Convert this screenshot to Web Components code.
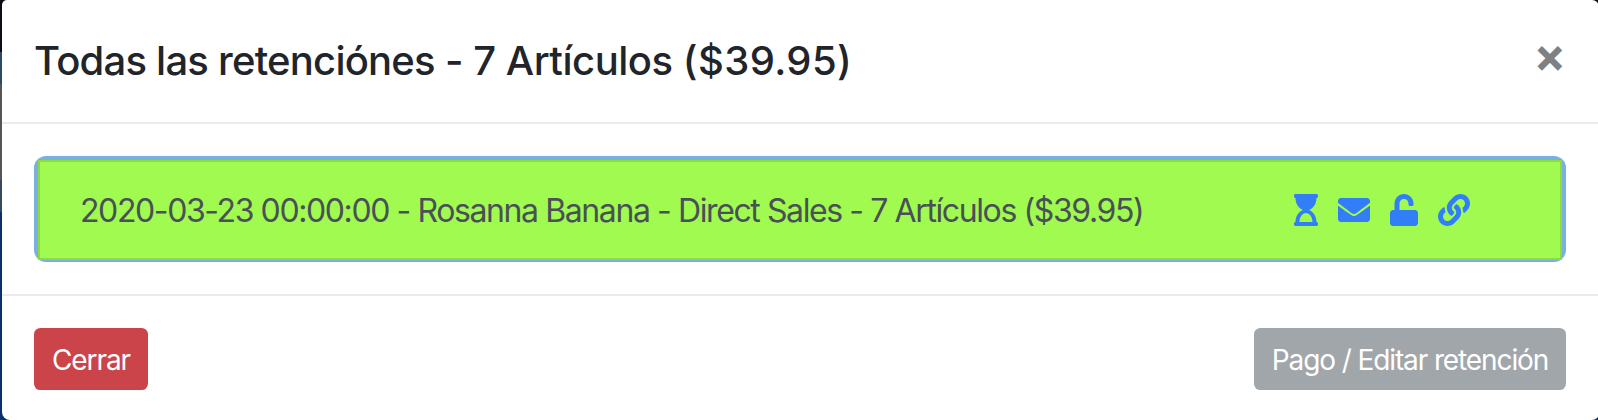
<!DOCTYPE html>
<html lang="es"><head><meta charset="utf-8"><title>Retenciones</title>
<style>
html,body{margin:0;height:420px;overflow:hidden}
body{font-family:Inter,"Liberation Sans",sans-serif;background:linear-gradient(#0c0c14 0 52px,#2d4a63 52px 84px,#555 84px 180px,#34495c 180px 212px,#0b3069 212px)}
.words{letter-spacing:-0.78px}
.amount{letter-spacing:0.4px}
</style></head><body>
<hold-modal>
<modal-title slot="title"><span class="words">Todas las retenciónes</span> - 7 Artículos <span class="amount">($39.95)</span></modal-title>
<close-button slot="title"></close-button>
<hold-item>2020-03-23 00:00:00 - Rosanna Banana - Direct Sales - 7 Artículos ($39.95)
<fa-icon slot="icons" name="hourglass"></fa-icon><fa-icon slot="icons" name="envelope"></fa-icon><fa-icon slot="icons" name="unlock"></fa-icon><fa-icon slot="icons" name="link"></fa-icon></hold-item>
<action-button slot="footer" style="--bg:#cb444a;--w:114px;--ls:-1.1px">Cerrar</action-button>
<action-button slot="footer" style="--bg:#a1a6aa;--w:312px;--ls:-1.11px">Pago / Editar retención</action-button>
</hold-modal>
<script>
const define=(name,html)=>customElements.define(name,class extends HTMLElement{
  constructor(){super();this.attachShadow({mode:'open'}).innerHTML=html;}
});
define('hold-modal',`<style>
:host{display:block;box-sizing:border-box;margin-left:2px;width:1597px;height:420px;background:#fff;border-radius:5px 7px 7px 8px}
header,footer{display:flex;justify-content:space-between;box-sizing:border-box;padding:0 33px 0 32px}
header{height:124px;border-bottom:2px solid #ebebef;align-items:center}
main{padding:32px 33px 32px 32px}
footer{height:126px;border-top:2px solid #ebebef;padding-top:32px;align-items:flex-start}
</style><header><slot name="title"></slot></header><main><slot></slot></main><footer><slot name="footer"></slot></footer>`);
define('modal-title',`<style>:host{display:block;font-size:40px;line-height:60px;font-weight:500;color:#212529;letter-spacing:-0.48px;white-space:nowrap;padding-bottom:1px}</style><slot></slot>`);
define('close-button',`<style>:host{display:block;font-size:48px;line-height:48px;font-weight:700;color:#808080;padding-bottom:12px}</style><span>×</span>`);
define('hold-item',`<style>
:host{display:block;box-sizing:border-box;height:106px;padding:4px 4px 2px;background:#7ab0e0;border-radius:12px}
.row{display:flex;align-items:center;box-sizing:border-box;height:100px;border:2px solid #8bdb45;background:#a0fa4f;padding:0 90px 0 40px;justify-content:space-between}
.text{font-size:32px;line-height:48px;color:#495057;letter-spacing:-1.4px;white-space:nowrap;padding-top:2px}
.icons{display:flex;gap:20px;align-items:center}
</style><div class="row"><div class="text"><slot></slot></div><div class="icons"><slot name="icons"></slot></div></div>`);
define('action-button',`<style>:host{display:block;box-sizing:border-box;width:var(--w);height:62px;border-radius:6.4px;background:var(--bg);color:#fff;font-size:28px;line-height:62px;padding-top:1px;text-align:center;letter-spacing:var(--ls);white-space:nowrap}</style><slot></slot>`);
const icons={
hourglass:[384,'M360 0H24C10.745 0 0 10.745 0 24v16c0 13.255 10.745 24 24 24 0 90.965 51.016 167.734 120.842 192C75.016 280.266 24 357.035 24 448c-13.255 0-24 10.745-24 24v16c0 13.255 10.745 24 24 24h336c13.255 0 24-10.745 24-24v-16c0-13.255-10.745-24-24-24 0-90.965-51.016-167.734-120.842-192C308.984 231.734 360 154.965 360 64c13.255 0 24-10.745 24-24V24c0-13.255-10.745-24-24-24zm-64 448H88c0-77.458 46.204-144 104-144 57.786 0 104 66.517 104 144z'],
envelope:[512,'M502.3 190.8c3.9-3.1 9.7-.2 9.7 4.7V400c0 26.5-21.5 48-48 48H48c-26.5 0-48-21.5-48-48V195.6c0-5 5.7-7.8 9.7-4.7 22.4 17.4 52.1 39.5 154.1 113.6 21.1 15.4 56.7 47.8 92.2 47.6 35.7.3 72-32.8 92.3-47.6 102-74.1 131.6-96.3 154-113.7zM256 320c23.2.4 56.6-29.2 73.4-41.4 132.7-96.3 142.8-104.7 173.4-128.7 5.8-4.5 9.2-11.5 9.2-18.9v-19c0-26.5-21.5-48-48-48H48c-26.5 0-48 21.5-48 48v19c0 7.4 3.4 14.3 9.2 18.9 30.6 23.9 40.7 32.4 173.4 128.7 16.8 12.2 50.2 41.8 73.4 41.4z'],
unlock:[448,'M400 256H152V152.9c0-39.6 31.7-72.5 71.3-72.9 40-.4 72.7 32.1 72.7 72v16c0 13.3 10.7 24 24 24h32c13.3 0 24-10.7 24-24v-16C376 68 307.5-.3 223.5 0 139.5.3 72 69.5 72 153.5V256H48c-26.5 0-48 21.5-48 48v160c0 26.5 21.5 48 48 48h352c26.5 0 48-21.5 48-48V304c0-26.5-21.5-48-48-48z'],
link:[512,'M326.612 185.391c59.747 59.809 58.927 155.698.36 214.59-.11.12-.24.25-.36.37l-67.2 67.2c-59.27 59.27-155.699 59.262-214.96 0-59.27-59.26-59.27-155.7 0-214.96l37.106-37.106c9.84-9.84 26.786-3.3 27.294 10.606.648 17.722 3.826 35.527 9.69 52.721 1.986 5.822.567 12.262-3.783 16.612l-13.087 13.087c-28.026 28.026-28.905 73.66-1.155 101.96 28.024 28.579 74.086 28.749 102.325.51l67.2-67.19c28.191-28.191 28.073-73.757 0-101.83-3.701-3.694-7.429-6.564-10.341-8.569a16.037 16.037 0 0 1-6.947-12.606c-.396-10.567 3.348-21.456 11.698-29.806l21.054-21.055c5.521-5.521 14.182-6.199 20.584-1.731a152.482 152.482 0 0 1 20.522 17.197zM467.547 44.449c-59.261-59.262-155.69-59.27-214.96 0l-67.2 67.2c-.12.12-.25.25-.36.37-58.566 58.892-59.387 154.781.36 214.59a152.454 152.454 0 0 0 20.521 17.196c6.402 4.468 15.064 3.789 20.584-1.731l21.054-21.055c8.35-8.35 12.094-19.239 11.698-29.806a16.037 16.037 0 0 0-6.947-12.606c-2.912-2.005-6.64-4.875-10.341-8.569-28.073-28.073-28.191-73.639 0-101.83l67.2-67.19c28.239-28.239 74.3-28.069 102.325.51 27.75 28.3 26.872 73.934-1.155 101.96l-13.087 13.087c-4.35 4.35-5.769 10.79-3.783 16.612 5.864 17.194 9.042 34.999 9.69 52.721.509 13.906 17.454 20.446 27.294 10.606l37.106-37.106c59.271-59.259 59.271-155.699.001-214.959z']};
customElements.define('fa-icon',class extends HTMLElement{
  connectedCallback(){
    const [w,d]=icons[this.getAttribute('name')];
    this.attachShadow({mode:'open'}).innerHTML=`<style>:host{display:block;height:32px;color:#327df8}svg{display:block}</style><svg width="${w/16}" height="32" viewBox="0 0 ${w} 512"><path fill="currentColor" d="${d}"/></svg>`;
  }
});
</script></body></html>
